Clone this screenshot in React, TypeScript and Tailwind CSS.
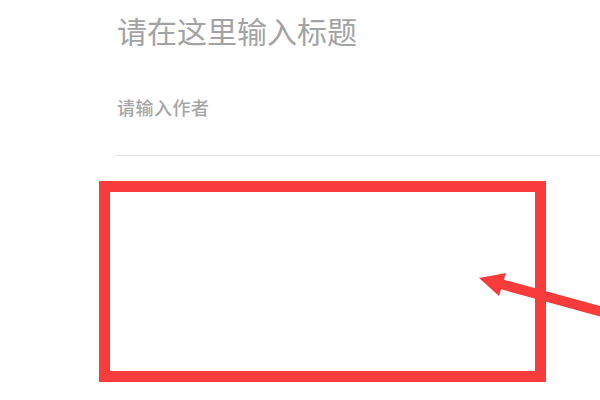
import React from "react";

export default function App() {
  return (
    <div
      className="relative w-[600px] h-[400px] overflow-hidden bg-white"
      style={{ fontFamily: '"Noto Sans CJK SC", "Noto Sans", sans-serif' }}
    >
      <div className="flex flex-col pt-[12px]">
        <div className="pl-[117px] text-[30px] leading-[36px] text-[#a3a3a3] font-normal">
          请在这里输入标题
        </div>
        <div className="pl-[117px] mt-[47px] text-[18px] leading-[24px] text-[#a6a6a6] font-medium tracking-[0.5px]">
          请输入作者
        </div>
        <div className="ml-[115px] mt-[36px] h-px bg-[#e3e3e3]" />
        <div className="ml-[99px] mt-[25px] w-[447px] h-[201px] border-[11px] border-[#f83b3b]" />
      </div>
      <svg
        className="absolute left-0 top-0"
        width="600"
        height="400"
        viewBox="0 0 600 400"
      >
        <line x1="497" y1="283" x2="610" y2="314" stroke="#f83b3b" strokeWidth="10" />
        <polygon points="479,278 506,273 499,296" fill="#f83b3b" />
      </svg>
    </div>
  );
}
